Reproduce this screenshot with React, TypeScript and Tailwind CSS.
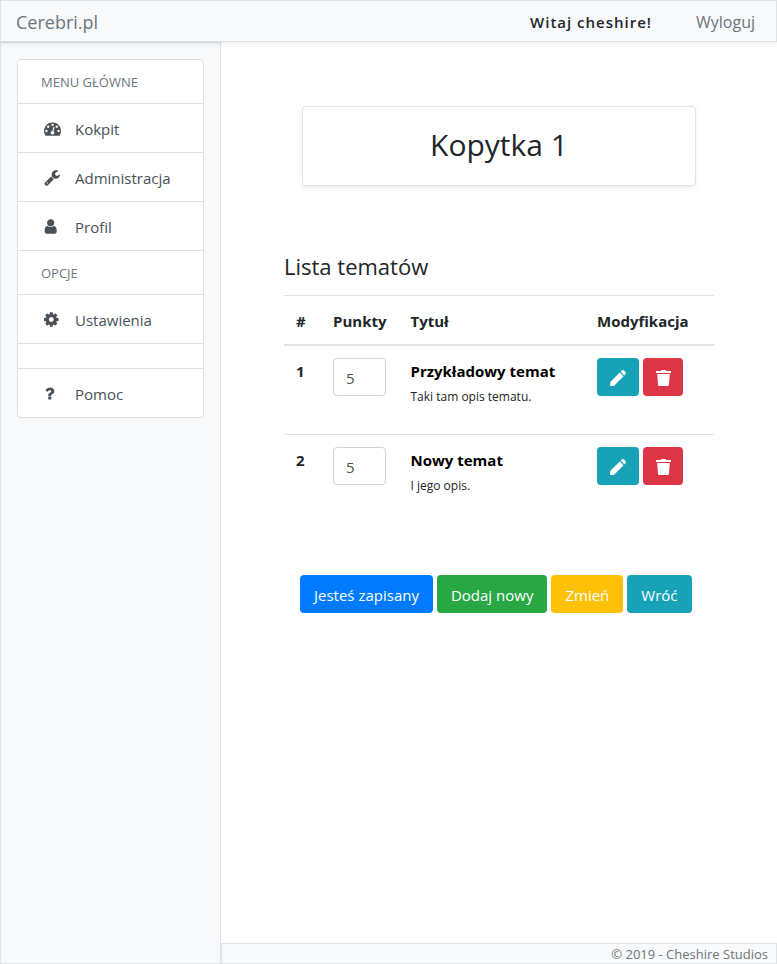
import type { ReactNode } from "react";

const paths = {
  dashboard:
    "M384 1152q0-53-37.5-90.5t-90.5-37.5-90.5 37.5-37.5 90.5 37.5 90.5 90.5 37.5 90.5-37.5 37.5-90.5zm192-448q0-53-37.5-90.5t-90.5-37.5-90.5 37.5-37.5 90.5 37.5 90.5 90.5 37.5 90.5-37.5 37.5-90.5zm428 481l101-382q6-26-7.5-48.5t-38.5-29.5-48 6.5-30 39.5l-101 382q-60 5-107 43.5t-63 98.5q-20 77 20 146t117 89 146-20 89-117q16-60-6-117t-72-91zm660-33q0-53-37.5-90.5t-90.5-37.5-90.5 37.5-37.5 90.5 37.5 90.5 90.5 37.5 90.5-37.5 37.5-90.5zm-640-640q0-53-37.5-90.5t-90.5-37.5-90.5 37.5-37.5 90.5 37.5 90.5 90.5 37.5 90.5-37.5 37.5-90.5zm448 192q0-53-37.5-90.5t-90.5-37.5-90.5 37.5-37.5 90.5 37.5 90.5 90.5 37.5 90.5-37.5 37.5-90.5zm320 448q0 261-141 483-19 29-54 29h-1402q-35 0-54-29-141-221-141-483 0-182 71-348t191-286 286-191 348-71 348 71 286 191 191 286 71 348z",
  wrench:
    "M448 1472q0-26-19-45t-45-19-45 19-19 45 19 45 45 19 45-19 19-45zm644-420l-682 682q-37 37-90 37-52 0-91-37l-106-108q-38-36-38-90 0-53 38-91l681-681q39 98 114.5 173.5t173.5 114.5zm634-435q0 39-23 106-47 134-164.5 217.5t-258.5 83.5q-185 0-316.5-131.5t-131.5-316.5 131.5-316.5 316.5-131.5q58 0 121.5 16.5t107.5 46.5q16 11 16 28t-16 28l-293 169v224l193 107q5-3 79-48.5t135.5-81 70.5-35.5q15 0 23.5 10t8.5 25z",
  user:
    "M1536 1399q0 109-62.5 187t-150.5 78h-854q-88 0-150.5-78t-62.5-187q0-85 8.5-160.5t31.5-152 58.5-131 94-89 134.5-34.5q131 128 313 128t313-128q76 0 134.5 34.5t94 89 58.5 131 31.5 152 8.5 160.5zm-256-887q0 159-112.5 271.5t-271.5 112.5-271.5-112.5-112.5-271.5 112.5-271.5 271.5-112.5 271.5 112.5 112.5 271.5z",
  cog:
    "M1152 896q0-106-75-181t-181-75-181 75-75 181 75 181 181 75 181-75 75-181zm512-109v222q0 12-8 23t-20 13l-185 28q-19 54-39 91 35 50 107 138 10 12 10 25t-9 23q-27 37-99 108t-94 71q-12 0-26-9l-138-108q-44 23-91 38-16 136-29 186-7 28-36 28h-222q-14 0-24.5-8.5t-11.5-21.5l-28-184q-49-16-90-37l-141 107q-10 9-25 9-14 0-25-11-126-114-165-168-7-10-7-23 0-12 8-23 15-21 51-66.5t54-70.5q-27-50-41-99l-183-27q-13-2-21-12.5t-8-23.5v-222q0-12 8-23t19-13l186-28q14-46 39-92-40-57-107-138-10-12-10-24 0-10 9-23 26-36 98.5-107.5t94.5-71.5q13 0 26 10l138 107q44-23 91-38 16-136 29-186 7-28 36-28h222q14 0 24.5 8.5t11.5 21.5l28 184q49 16 90 37l142-107q9-9 24-9 13 0 25 10 129 119 165 170 7 8 7 22 0 12-8 23-15 21-51 66.5t-54 70.5q26 50 41 98l183 28q13 2 21 12.5t8 23.5z",
  question:
    "M1088 1256v240q0 16-12 28t-28 12h-240q-16 0-28-12t-12-28v-240q0-16 12-28t28-12h240q16 0 28 12t12 28zm316-600q0 54-15.5 101t-35 76.5-55 59.5-57.5 43.5-61 35.5q-41 23-68.5 65t-27.5 67q0 17-12 32.5t-28 15.5h-240q-15 0-25.5-18.5t-10.5-37.5v-45q0-83 65-156.5t143-108.5q59-27 84-56t25-76q0-42-46.5-74t-107.5-32q-65 0-108 29-35 25-107 115-13 16-31 16-12 0-25-8l-164-125q-13-10-15.5-25t5.5-28q160-266 464-266 80 0 161 31t146 83 106 127.5 41 158.5z",
};

type IconName = keyof typeof paths;

// View boxes that put each glyph's left edge at the edge of its icon.
const boxes: Record<IconName, string> = {
  dashboard: "0 0 1792 1792",
  wrench: "32 0 1792 1792",
  user: "192 0 1792 1792",
  cog: "128 0 1792 1792",
  question: "320 0 1792 1792",
};

function MenuLink({ icon, children }: { icon: IconName; children: ReactNode }) {
  return (
    <li className="border-b border-[#dfdfdf] last:border-b-0">
      <a href="#" className="flex h-12 items-center gap-3.5 pt-0.5 pl-[26px] text-[15px] text-[#495057]">
        <svg viewBox={boxes[icon]} className="mb-0.5 size-[17px] fill-current" aria-hidden="true">
          <path d={paths[icon]} />
        </svg>
        {children}
      </a>
    </li>
  );
}

function MenuHeading({ children }: { children: ReactNode }) {
  return (
    <li className="flex h-11 items-center border-b border-[#dfdfdf] pl-[23px] text-[13px] text-[#6c757d] uppercase">
      {children}
    </li>
  );
}

function PencilIcon() {
  return (
    <svg viewBox="0 0 16 16" className="mt-0.5 size-4 fill-current" aria-hidden="true">
      <path d="M9.8 2.4 13.6 6.2 4.6 15.2Q4 15.8 3 15.9L0 16 .2 13Q.3 12 .9 11.3Z" />
      <path d="M10.6 1.6 11.4.8Q12.8-.6 14.2.6L15.4 1.8Q16.6 3.2 15.2 4.6L14.4 5.4Z" />
    </svg>
  );
}

function TrashIcon() {
  return (
    <svg viewBox="0 0 15 16" className="mt-0.5 h-4 w-[15px] fill-current" aria-hidden="true">
      <path d="M0 1H4.6Q5 0 6 0H9Q10 0 10.4 1H15V3H0Z" />
      <path d="M1.2 4H13.8L13 14.8Q12.9 16 11.8 16H3.2Q2.1 16 2 14.8Z" />
    </svg>
  );
}

const topics = [
  { id: 1, points: 5, title: "Przykładowy temat", text: "Taki tam opis tematu." },
  { id: 2, points: 5, title: "Nowy temat", text: "I jego opis." },
];

const actions = [
  { label: "Jesteś zapisany", color: "bg-[#007bff]" },
  { label: "Dodaj nowy", color: "bg-[#28a745]" },
  { label: "Zmień", color: "bg-[#ffc107]" },
  { label: "Wróć", color: "bg-[#17a2b8]" },
];

export default function App() {
  return (
    <div className="flex min-h-screen flex-col bg-white font-['Open_Sans','Noto_Sans',sans-serif] text-[15px] leading-6 text-[#212529]">
      <header className="z-10 flex h-[42px] items-center justify-between border border-[#dee2e6] bg-[#f8f9fa] pr-[21px] pl-[15px] shadow-[0_2px_4px_rgba(0,0,0,0.075)]">
        <a href="#" className="pt-0.5 text-lg text-[#6c757d]">
          Cerebri.pl
        </a>
        <div className="flex items-center gap-11 pt-0.5">
          <span className="font-semibold tracking-[1px]">Witaj cheshire!</span>
          <a href="#" className="text-base text-[#6c757d]">
            Wyloguj
          </a>
        </div>
      </header>

      <div className="flex flex-1">
        <aside className="w-[221px] shrink-0 border border-[#dee2e6] bg-[#f8f9fa] p-4">
          <nav>
            <ul className="rounded border border-[#dfdfdf] bg-white">
              <MenuHeading>Menu główne</MenuHeading>
              <MenuLink icon="dashboard">Kokpit</MenuLink>
              <MenuLink icon="wrench">Administracja</MenuLink>
              <MenuLink icon="user">Profil</MenuLink>
              <MenuHeading>Opcje</MenuHeading>
              <MenuLink icon="cog">Ustawienia</MenuLink>
              <li className="h-[25px] border-b border-[#dfdfdf]" />
              <MenuLink icon="question">Pomoc</MenuLink>
            </ul>
          </nav>
        </aside>

        <div className="flex min-w-0 flex-1 flex-col">
          <main className="flex-1 px-[63px] pt-16">
            <h1 className="mx-[18px] rounded-sm border border-[#dee2e6] pt-[19px] pb-[21px] text-center text-[30px] leading-[38px] shadow-[0_2px_4px_rgba(0,0,0,0.075)]">
              Kopytka 1
            </h1>

            <h2 className="mt-16 text-[22px] leading-8">Lista tematów</h2>

            <table className="mt-[13px] w-full text-left">
              <thead>
                <tr className="border-t border-b-2 border-[#dee2e6]">
                  <th className="w-[37px] px-3 pt-[13px] pb-[11px] font-bold">#</th>
                  <th className="w-[77px] px-3 pt-[13px] pb-[11px] font-bold">Punkty</th>
                  <th className="px-3 pt-[13px] pb-[11px] font-bold">Tytuł</th>
                  <th className="w-[129px] px-3 pt-[13px] pb-[11px] font-bold">Modyfikacja</th>
                </tr>
              </thead>
              <tbody>
                {topics.map((t) => (
                  <tr key={t.id} className="h-[89px] border-b border-[#dee2e6] align-top last:border-b-0">
                    <th scope="row" className="px-3 pt-[13px] font-bold">
                      {t.id}
                    </th>
                    <td className="px-3 pt-3">
                      <input
                        aria-label={`Punkty: ${t.title}`}
                        defaultValue={t.points}
                        className="block h-[38px] w-[53px] rounded border border-[#ced4da] px-3 pt-0.5 text-[#495057]"
                      />
                    </td>
                    <td className="px-3 pt-[13px]">
                      <a href="#" className="block font-bold text-black">
                        {t.title}
                      </a>
                      <p className="pt-0.5 text-xs leading-6">{t.text}</p>
                    </td>
                    <td className="px-3 pt-3">
                      <div className="flex gap-1">
                        <button
                          type="button"
                          aria-label="Edytuj"
                          className="flex h-[38px] w-[42px] items-center justify-center rounded bg-[#17a2b8] text-white"
                        >
                          <PencilIcon />
                        </button>
                        <button
                          type="button"
                          aria-label="Usuń"
                          className="flex h-[38px] w-10 items-center justify-center rounded bg-[#dc3545] text-white"
                        >
                          <TrashIcon />
                        </button>
                      </div>
                    </td>
                  </tr>
                ))}
              </tbody>
            </table>

            <div className="mt-[52px] flex flex-wrap gap-1 px-4 text-white">
              {actions.map((a) => (
                <button key={a.label} type="button" className={`h-[38px] rounded px-3.5 pt-0.5 ${a.color}`}>
                  {a.label}
                </button>
              ))}
            </div>
          </main>

          <footer className="h-[21px] border border-[#dee2e6] bg-[#f8f9fa] pr-2 text-right text-[13px] leading-5 text-[#6c757d]">
            © 2019 - Cheshire Studios
          </footer>
        </div>
      </div>
    </div>
  );
}
